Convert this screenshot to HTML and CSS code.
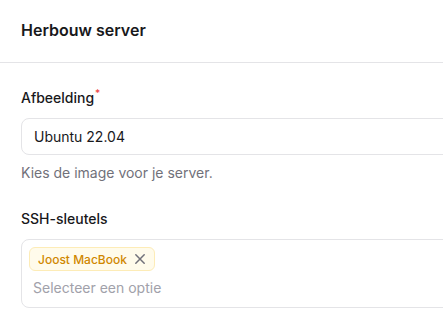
FILE: index.html
```html
<html>
<head>
    <meta name="viewport" content="width=device-width, initial-scale=1.0">
    <link rel="stylesheet" href="styles.css">
</head>
<body>
    <div class="modal">
        <div class="header">
            <h2>Herbouw server</h2>
        </div>

        <div class="content">
            <div class="field">
                <label class="label">Afbeelding<sup class="required">*</sup></label>
                <div class="input">Ubuntu 22.04</div>
                <p class="helper">Kies de image voor je server.</p>
            </div>

            <div class="field">
                <label class="label">SSH-sleutels</label>
                <div class="multiselect">
                    <div class="tags">
                        <span class="tag">
                            Joost MacBook
                            <svg class="tag-remove" viewBox="0 0 12 12" width="12" height="12">
                                <path d="M1.8 1.8l8.4 8.4M10.2 1.8l-8.4 8.4" stroke="currentColor" stroke-width="1.5" stroke-linecap="round" fill="none" />
                            </svg>
                        </span>
                    </div>
                    <div class="placeholder">Selecteer een optie</div>
                </div>
            </div>
        </div>
    </div>
</body>
</html>
```

FILE: styles.css
```css
* {
    margin: 0;
    padding: 0;
    box-sizing: border-box;
}

body {
    background: white;
    font-family: Inter, "Noto Sans", sans-serif;
    color: #18181b;
    overflow: hidden;
}

.modal {
    width: 470px;
}

.header {
    height: 63px;
    padding: 20px 21px 0;
    border-bottom: 1px solid #e4e4e7;
}

.header h2 {
    font-size: 16px;
    line-height: 20px;
    font-weight: 600;
    color: #18181b;
}

.content {
    padding: 25px 0 0 21px;
    display: flex;
    flex-direction: column;
    gap: 26px;
}

.field {
    display: flex;
    flex-direction: column;
}

.label {
    font-size: 14px;
    line-height: 20px;
    font-weight: 500;
    margin-bottom: 10px;
}

.required {
    color: #ef4444;
    font-size: 10px;
    line-height: 0;
    vertical-align: 6px;
    margin-left: 1px;
}

.input {
    height: 37px;
    border: 1px solid #e4e4e7;
    border-radius: 8px;
    padding: 0 12px;
    display: flex;
    align-items: center;
    font-size: 14px;
}

.helper {
    margin-top: 8px;
    font-size: 14px;
    line-height: 20px;
    color: #71717a;
}

.multiselect {
    height: 69px;
    border: 1px solid #e4e4e7;
    border-radius: 8px;
    padding: 7px 7px 0;
}

.tags {
    display: flex;
}

.tag {
    display: inline-flex;
    align-items: center;
    gap: 7px;
    height: 24px;
    padding: 0 8px 0 8px;
    background: #fffbeb;
    border: 1px solid #fdecb7;
    border-radius: 6px;
    color: #d08700;
    font-size: 12px;
    font-weight: 500;
}

.tag-remove {
    color: #71717a;
}

.placeholder {
    margin-top: 7px;
    padding-left: 4px;
    font-size: 14px;
    line-height: 20px;
    color: #a1a1aa;
}
```
